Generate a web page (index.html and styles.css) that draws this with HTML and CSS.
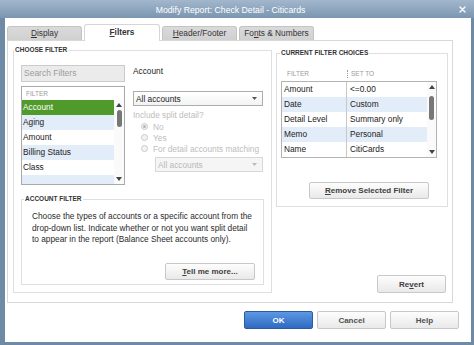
FILE: index.html
```html
<!DOCTYPE html>
<html>
<head>
<meta charset="utf-8">
<title>Modify Report</title>
<link rel="stylesheet" href="styles.css">
</head>
<body>
<div class="window">
  <div class="titlebar">
    <span class="title">Modify Report: Check Detail - Citicards</span>
    <span class="close"><svg width="7" height="7" viewBox="0 0 7 7"><path d="M1 1L6 6M6 1L1 6" stroke="#fff" stroke-width="1.5" stroke-linecap="round"/></svg></span>
  </div>
  <div class="client">
    <div class="tabs">
      <div class="tab"><u>D</u>isplay</div>
      <div class="tab active"><u>F</u>ilters</div>
      <div class="tab"><u>H</u>eader/Footer</div>
      <div class="tab">Fo<u>n</u>ts &amp; Numbers</div>
    </div>
    <div class="panel">
      <fieldset class="group choose">
        <legend>CHOOSE FILTER</legend>
        <div class="choose-body">
          <div class="choose-top">
            <div class="filter-col">
              <div class="search">Search Filters</div>
              <div class="flist">
                <div class="flist-head">FILTER</div>
                <div class="flist-body">
                  <div class="frows">
                    <div class="frow sel">Account</div>
                    <div class="frow alt">Aging</div>
                    <div class="frow">Amount</div>
                    <div class="frow alt">Billing Status</div>
                    <div class="frow">Class</div>
                    <div class="frow alt"></div>
                  </div>
                  <div class="vscroll">
                    <svg class="arr" width="6" height="4" viewBox="0 0 6 4"><path d="M0 4L3 0L6 4Z" fill="#444"/></svg>
                    <div class="thumb list-thumb"></div>
                    <div class="spacer"></div>
                    <svg class="arr" width="6" height="4" viewBox="0 0 6 4"><path d="M0 0L6 0L3 4Z" fill="#444"/></svg>
                  </div>
                </div>
              </div>
            </div>
            <div class="account-col">
              <div class="acct-label">Account</div>
              <div class="select">
                <span>All accounts</span>
                <svg width="5" height="3" viewBox="0 0 5 3"><path d="M0 0L5 0L2.5 3Z" fill="#555"/></svg>
              </div>
              <div class="split-q">Include split detail?</div>
              <div class="radios">
                <div class="radio"><span class="dot checked"></span>No</div>
                <div class="radio"><span class="dot"></span>Yes</div>
                <div class="radio"><span class="dot"></span>For detail accounts matching</div>
              </div>
              <div class="select disabled">
                <span>All accounts</span>
                <svg width="5" height="3" viewBox="0 0 5 3"><path d="M0 0L5 0L2.5 3Z" fill="#bbb"/></svg>
              </div>
            </div>
          </div>
          <fieldset class="group acct">
            <legend>ACCOUNT FILTER</legend>
            <div class="acct-body">
              <p class="help-text">Choose the types of accounts or a specific account from the<br>drop-down list. Indicate whether or not you want split detail<br>to appear in the report (Balance Sheet accounts only).</p>
              <button class="btn tell"><u>T</u>ell me more...</button>
            </div>
          </fieldset>
        </div>
      </fieldset>
      <div class="right-col">
        <fieldset class="group current">
          <legend>CURRENT FILTER CHOICES</legend>
          <div class="current-body">
            <div class="ctable-head">
              <span class="h1">FILTER</span>
              <span class="h2">SET TO</span>
            </div>
            <div class="ctable">
              <div class="crows">
                <div class="crow"><span class="c1">Amount</span><span class="c2">&lt;=0.00</span></div>
                <div class="crow alt"><span class="c1">Date</span><span class="c2">Custom</span></div>
                <div class="crow"><span class="c1">Detail Level</span><span class="c2">Summary only</span></div>
                <div class="crow alt"><span class="c1">Memo</span><span class="c2">Personal</span></div>
                <div class="crow"><span class="c1">Name</span><span class="c2">CitiCards</span></div>
              </div>
              <div class="vscroll narrow">
                <svg class="arr" width="6" height="4" viewBox="0 0 6 4"><path d="M0 4L3 0L6 4Z" fill="#444"/></svg>
                <div class="thumb table-thumb"></div>
                <div class="spacer"></div>
                <svg class="arr" width="6" height="4" viewBox="0 0 6 4"><path d="M0 0L6 0L3 4Z" fill="#444"/></svg>
              </div>
            </div>
            <button class="btn remove"><u>R</u>emove Selected Filter</button>
          </div>
        </fieldset>
        <button class="btn revert">Re<u>v</u>ert</button>
      </div>
    </div>
    <div class="actions">
      <button class="btn primary">OK</button>
      <button class="btn">Cancel</button>
      <button class="btn">Help</button>
    </div>
  </div>
</div>
</body>
</html>
```

FILE: styles.css
```css
* { box-sizing: border-box; }
html, body { margin: 0; padding: 0; }
body {
  width: 474px;
  height: 345px;
  overflow: hidden;
  font-family: "Liberation Sans", Arial, sans-serif;
  font-size: 8.3px;
  color: #2b2b2b;
  background: #6d89a4;
}
.window {
  display: flex;
  flex-direction: column;
  width: 474px;
  height: 345px;
  background: #6e8aa5;
}
.titlebar {
  flex: none;
  height: 18px;
  display: grid;
  grid-template-columns: 1fr auto 1fr;
  align-items: center;
  background: linear-gradient(#a2b7cc, #7b96b1);
  color: #fff;
}
.title {
  grid-column: 2;
  font-size: 8.7px;
  line-height: 18px;
  margin-right: 13px;
  padding-top: 1px;
}
.close {
  grid-column: 3;
  justify-self: end;
  margin-right: 8px;
  display: flex;
  opacity: 0.9;
}
.client {
  flex: 1;
  margin: 0 3px 3px 5px;
  background: #fff;
  display: flex;
  flex-direction: column;
  padding: 6px 0 0 2px;
}
/* tabs */
.tabs {
  display: flex;
  gap: 2px;
  height: 16px;
  align-items: flex-end;
  position: relative;
  z-index: 1;
}
.tab {
  width: 75px;
  height: 14px;
  border: 1px solid #c4c4c4;
  border-bottom: none;
  border-radius: 3px 3px 0 0;
  background: linear-gradient(#dadada, #d0d0d0);
  text-align: center;
  line-height: 13px;
  color: #333;
}
.tab.active {
  width: 76px;
  height: 17px;
  margin-bottom: -1px;
  background: #fff;
  border-color: #d6d6d6;
  font-weight: bold;
  line-height: 15px;
}
/* panel */
.panel {
  width: 446px;
  height: 263px;
  border: 1px solid #d8d8d8;
  padding: 5px 0 0 5px;
  display: flex;
  gap: 4px;
}
.group {
  margin: 0;
  padding: 0;
  min-width: 0;
  border: 1px solid #dfdfdf;
}
.group > legend {
  padding: 0 1px;
  font-size: 6.5px;
  font-weight: bold;
  line-height: 8px;
  color: #333;
}
.choose {
  width: 259px;
  height: 247px;
  flex: none;
}
.choose-body {
  height: 238px;
  padding: 11px 7px 7px 7px;
  display: flex;
  flex-direction: column;
}
.choose-top {
  display: flex;
  gap: 8px;
}
.filter-col {
  width: 104px;
  display: flex;
  flex-direction: column;
}
.search {
  height: 17px;
  border: 1px solid #cbcbcb;
  background: #ebebeb;
  color: #9b9b9b;
  padding-left: 2px;
  line-height: 15px;
  font-size: 8.5px;
}
.flist {
  margin-top: 4px;
  height: 99px;
  border: 1px solid #a9a9a9;
  display: flex;
  flex-direction: column;
}
.flist-head {
  height: 13px;
  line-height: 13px;
  padding-left: 4px;
  font-size: 6.5px;
  color: #9a9a9a;
  flex: none;
}
.flist-body {
  flex: 1;
  display: flex;
  overflow: hidden;
}
.frows { flex: 1; overflow: hidden; }
.frow {
  height: 15px;
  line-height: 15px;
  padding-left: 1px;
  color: #222;
}
.frow.alt { background: #e3edf9; }
.frow.sel { background: #4f9a2a; color: #fff; }
.vscroll {
  width: 10px;
  flex: none;
  display: flex;
  flex-direction: column;
  align-items: center;
  padding: 3px 0 3px;
  background: #fafafa;
}
.vscroll.narrow { width: 9px; }
.arr { flex: none; display: block; }
.thumb {
  width: 5px;
  background: #777;
  border-radius: 3px;
  flex: none;
}
.list-thumb { height: 17px; margin-top: 3px; }
.table-thumb { height: 24px; margin-top: 7px; }
.spacer { flex: 1; }

.account-col {
  width: 130px;
  display: flex;
  flex-direction: column;
}
.acct-label {
  line-height: 13px;
  color: #222;
}
.select {
  margin-top: 13px;
  height: 15px;
  border: 1px solid #adadad;
  background: linear-gradient(#ffffff, #f3f3f3);
  display: flex;
  align-items: center;
  justify-content: space-between;
  padding: 0 5px 0 2px;
  color: #222;
}
.select.disabled {
  margin-top: 3px;
  margin-left: 22px;
  border-color: #d8d8d8;
  background: #f5f5f5;
  color: #b8b8b8;
}
.split-q {
  margin-top: 4px;
  line-height: 10px;
  color: #bdbdbd;
}
.radios {
  margin-top: 1px;
  display: flex;
  flex-direction: column;
}
.radio {
  height: 11px;
  display: flex;
  align-items: center;
  gap: 5px;
  padding-left: 8px;
  color: #bdbdbd;
}
.dot {
  width: 7px;
  height: 7px;
  border-radius: 50%;
  border: 1px solid #cacaca;
  background: #f3f3f3;
  flex: none;
  display: flex;
  align-items: center;
  justify-content: center;
}
.dot.checked::after {
  content: "";
  width: 3px;
  height: 3px;
  border-radius: 50%;
  background: #b5b5b5;
}
.acct {
  margin-top: 10px;
  height: 90px;
  flex: none;
}
.acct > legend { margin-left: 2px; }
.acct-body {
  height: 81px;
  padding: 8px 8px 4px 10px;
  display: flex;
  flex-direction: column;
}
.help-text {
  margin: 0;
  line-height: 11.5px;
  white-space: nowrap;
  color: #2b2b2b;
}
.btn {
  font-family: "Liberation Sans", Arial, sans-serif;
  font-size: 8px;
  font-weight: bold;
  color: #404040;
  background: linear-gradient(#fdfdfd, #e9e9e9);
  border: 1px solid #c8c8c8;
  border-radius: 2px;
  padding: 0;
  height: 17px;
  cursor: default;
}
.tell {
  margin-top: auto;
  align-self: flex-end;
  width: 90px;
}
/* right column */
.right-col {
  width: 172px;
  height: 247px;
  display: flex;
  flex-direction: column;
}
.current {
  margin-top: 3px;
  height: 158px;
  flex: none;
}
.current > legend { margin-left: 3px; }
.current-body {
  height: 149px;
  padding: 9px 10px 0 4px;
  display: flex;
  flex-direction: column;
}
.ctable-head {
  height: 15px;
  display: flex;
  align-items: center;
  font-size: 6.5px;
  color: #9a9a9a;
}
.h1 { width: 66px; padding-left: 6px; }
.h2 {
  border-left: 1px dotted #9a9a9a;
  padding-left: 3px;
  line-height: 8px;
}
.ctable {
  height: 77px;
  border: 1px solid #b3b3b3;
  display: flex;
}
.crows { flex: 1; }
.crow {
  height: 15px;
  display: flex;
  color: #222;
}
.crow.alt { background: #e3edf9; }
.c1 {
  width: 65px;
  border-right: 1px solid #c8c8c8;
  padding-left: 2px;
  line-height: 15px;
}
.c2 {
  padding-left: 3px;
  line-height: 15px;
}
.remove {
  margin-top: 24px;
  margin-left: 28px;
  align-self: flex-start;
  width: 120px;
}
.revert {
  margin-top: auto;
  align-self: flex-end;
  margin-right: 2px;
  width: 69px;
  height: 18px;
}
/* bottom buttons */
.actions {
  display: flex;
  justify-content: flex-end;
  gap: 4px;
  margin-top: 8px;
  padding-right: 12px;
}
.actions .btn {
  width: 69px;
  height: 18px;
  color: #505050;
}
.actions .btn.primary {
  background: linear-gradient(#5d98e3, #2f69c2);
  border-color: #2a5ba3;
  color: #fff;
}
```
